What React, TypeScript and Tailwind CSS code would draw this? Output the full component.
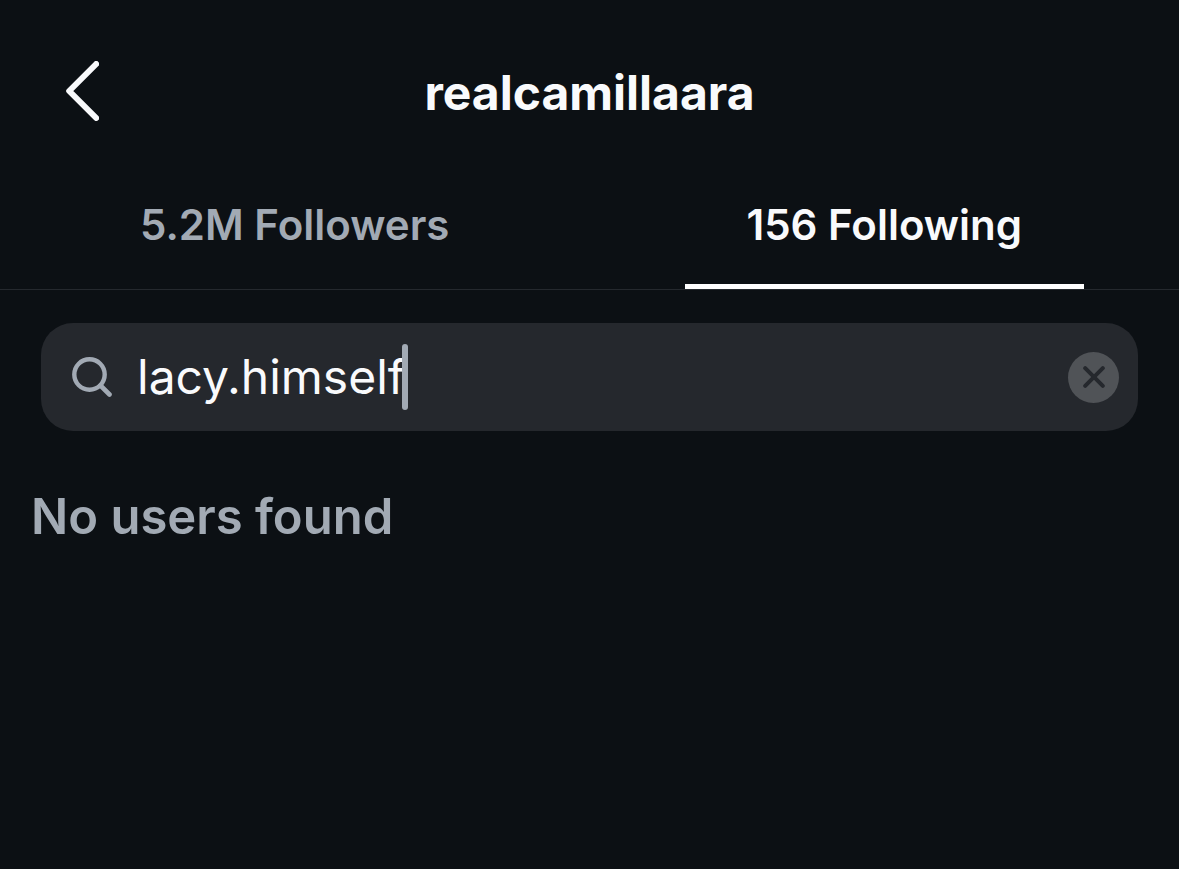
import { useState } from "react";

function BackIcon() {
  return (
    <svg viewBox="0 0 34 60" fill="none" className="h-[60px] w-[34px]" aria-hidden="true">
      <path
        d="M31.2 3 4.2 30l27 27"
        stroke="currentColor"
        strokeWidth="6"
        strokeLinecap="round"
        strokeLinejoin="round"
      />
    </svg>
  );
}

function SearchIcon() {
  return (
    <svg viewBox="0 0 40 40" fill="none" className="h-10 w-10" role="img" aria-label="Search">
      <circle cx="17.5" cy="17.5" r="15.2" stroke="currentColor" strokeWidth="4.4" />
      <path d="m28.5 28.5 9 9" stroke="currentColor" strokeWidth="4.6" strokeLinecap="round" />
    </svg>
  );
}

function ClearIcon() {
  return (
    <svg viewBox="0 0 22 22" fill="none" className="h-[22px] w-[22px]" aria-hidden="true">
      <path d="m2.2 2.2 17.6 17.6M19.8 2.2 2.2 19.8" stroke="currentColor" strokeWidth="4" strokeLinecap="round" />
    </svg>
  );
}

const tabs = [
  { id: "followers", label: "5.2M Followers" },
  { id: "following", label: "156 Following" },
];

export default function App() {
  const [active, setActive] = useState("following");
  const [query, setQuery] = useState("lacy.himself");

  return (
    <div className="min-h-screen bg-[#0c1014] font-['Inter','Liberation_Sans',sans-serif] text-[#f9fafc]">
      <header className="grid grid-cols-[1fr_auto_1fr] items-start px-[65px] pt-[61px] pb-[38px]">
        <button type="button" aria-label="Back" className="justify-self-start">
          <BackIcon />
        </button>
        <h1 className="text-[48px] leading-[64px] font-bold">realcamillaara</h1>
      </header>

      <div role="tablist" className="grid grid-cols-2 border-b border-[#25292e]">
        {tabs.map((tab) => (
          <button
            key={tab.id}
            type="button"
            role="tab"
            aria-selected={active === tab.id}
            onClick={() => setActive(tab.id)}
            className="group flex flex-col items-center pt-9 text-[42px] leading-[52px] font-semibold text-[#a2aab4] aria-selected:text-[#f9fafc]"
          >
            {tab.label}
            <span className="mx-[95px] mt-[33px] h-[5px] self-stretch group-aria-selected:bg-white" />
          </button>
        ))}
      </div>

      <main className="pt-[33px]">
        <div className="mx-[41px] flex h-[108px] items-center rounded-[32px] bg-[#25282d] pr-[19px] pl-[31px]">
          <label htmlFor="user-search" className="shrink-0 text-[#a2aab4]">
            <SearchIcon />
          </label>
          <input
            id="user-search"
            type="text"
            value={query}
            onChange={(e) => setQuery(e.target.value)}
            autoComplete="off"
            spellCheck={false}
            className="ml-[25px] field-sizing-content max-w-full min-w-0 bg-transparent text-[48px] leading-[60px] caret-transparent outline-none"
          />
          <span className="-ml-1 h-[66px] w-[6px] shrink-0 rounded-full bg-[#a2aab4]" />
          <button
            type="button"
            aria-label="Clear search"
            onClick={() => setQuery("")}
            className="ml-auto grid h-[51px] w-[51px] shrink-0 place-items-center rounded-full bg-[#505357] text-[#25282d]"
          >
            <ClearIcon />
          </button>
        </div>

        <p className="mt-14 px-[31px] text-[49px] leading-[60px] font-semibold text-[#a2aab4]">
          No users found
        </p>
      </main>
    </div>
  );
}
